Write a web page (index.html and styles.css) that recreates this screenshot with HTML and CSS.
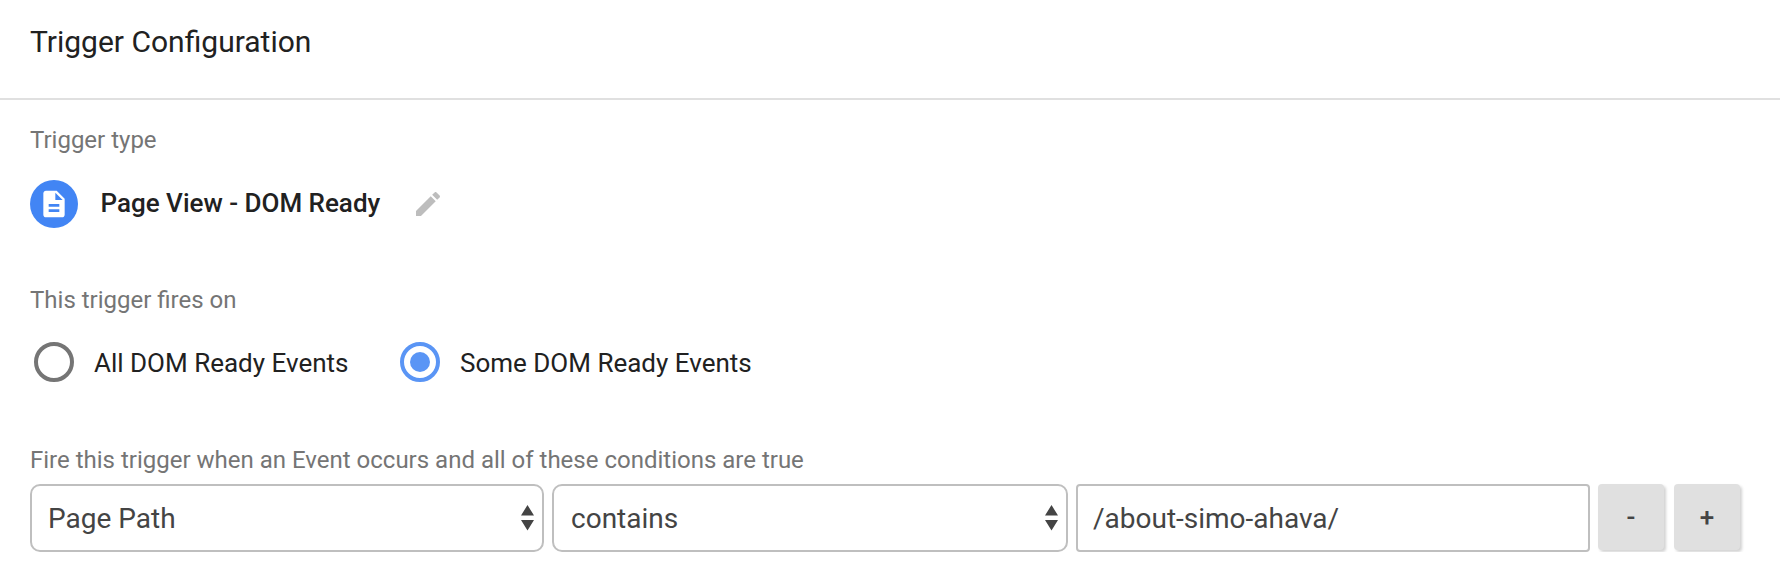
FILE: index.html
```html
<!DOCTYPE html>
<html lang="en">
<head>
<meta charset="utf-8">
<title>Trigger Configuration</title>
<link rel="stylesheet" href="styles.css">
</head>
<body>
<header class="header"><h1 class="title">Trigger Configuration</h1></header>
<main class="content">
  <section class="type-section">
    <div class="label">Trigger type</div>
    <div class="type-row">
      <span class="type-icon">
        <svg width="32" height="32" viewBox="0 0 24 24"><path fill="#fff" d="M14 2H6c-1.1 0-1.99.9-1.99 2L4 20c0 1.1.89 2 1.99 2H18c1.1 0 2-.9 2-2V8l-6-6zm2 16H8v-2h8v2zm0-4H8v-2h8v2zm-3-5V3.500L18.500 9H13z"/></svg>
      </span>
      <span class="type-name">Page View - DOM Ready</span>
      <svg class="edit" width="32" height="32" viewBox="0 0 24 24"><path fill="#bdbdbd" d="M3 17.250V21h3.750L17.810 9.940l-3.750-3.750L3 17.250zM20.710 7.040c.39-.39.39-1.020 0-1.410l-2.340-2.340c-.39-.39-1.020-.39-1.410 0l-1.830 1.830 3.750 3.750 1.830-1.830z"/></svg>
    </div>
  </section>
  <section class="fires-section">
    <div class="label">This trigger fires on</div>
    <div class="radios">
      <div class="radio"><span class="ring"></span><span class="radio-text">All DOM Ready Events</span></div>
      <div class="radio"><span class="ring checked"></span><span class="radio-text">Some DOM Ready Events</span></div>
    </div>
  </section>
  <section>
    <div class="label conditions-label">Fire this trigger when an Event occurs and all of these conditions are true</div>
    <div class="conditions">
      <div class="field select"><span class="value">Page Path</span><svg class="arrows" width="13" height="26" viewBox="0 0 13 26"><path fill="#444" d="M0 10.500 6.500 0 13 10.500zM0 15h13L6.500 25.500z"/></svg></div>
      <div class="field select wide"><span class="value">contains</span><svg class="arrows" width="13" height="26" viewBox="0 0 13 26"><path fill="#444" d="M0 10.500 6.500 0 13 10.500zM0 15h13L6.500 25.500z"/></svg></div>
      <div class="field input"><span class="value">/about-simo-ahava/</span></div>
      <div class="buttons">
        <div class="btn">-</div>
        <div class="btn">+</div>
      </div>
    </div>
  </section>
</main>
</body>
</html>
```
FILE: styles.css
```css
* { box-sizing: border-box; }
body { margin: 0; background: #fff; color: #212121; font-family: Roboto, "Liberation Sans", sans-serif; }
.header { height: 100px; padding: 22px 30px 0; border-bottom: 2px solid #e0e0e0; }
.title { margin: 0; font-size: 30px; line-height: 40px; font-weight: 400; }
.content { padding: 24px 30px 0; }
.label { font-size: 24px; line-height: 32px; color: #757575; }
.type-section { height: 160px; }
.type-row { display: flex; align-items: center; height: 48px; margin-top: 24px; }
.type-icon { display: flex; align-items: center; justify-content: center; width: 48px; height: 48px; border-radius: 50%; background: #4285f4; }
.type-name { width: 281px; margin-left: 22.5px; padding-bottom: 2px; font-size: 26px; font-weight: 500; white-space: nowrap; }
.edit { margin-left: 30.5px; }
.fires-section { height: 160px; }
.radios { display: flex; padding: 26px 4px 0; }
.radio { display: flex; align-items: center; height: 40px; width: 366px; }
.ring { display: flex; align-items: center; justify-content: center; width: 40px; height: 40px; border: 4px solid #757575; border-radius: 50%; }
.checked { border-color: #5a95f5; }
.checked::after { content: ""; width: 20px; height: 20px; border-radius: 50%; background: #5a95f5; }
.radio-text { margin-left: 20px; padding-top: 2px; font-size: 26px; white-space: nowrap; }
.conditions-label { white-space: nowrap; }
.conditions { display: flex; gap: 8px; margin-top: 8px; }
.field { display: flex; align-items: center; justify-content: space-between; width: 514px; height: 68px; padding: 0 8px 0 16px; border: 2px solid #bfbfbf; border-radius: 4px; color: #444; font-size: 28px; }
.select { border-radius: 10px; }
.wide { width: 516px; padding-left: 17px; }
.input { padding-left: 15px; }
.buttons { display: flex; gap: 10px; }
.btn { display: flex; align-items: center; justify-content: center; width: 66px; height: 66px; border-radius: 4px; background: #e0e0e0; box-shadow: 2px 2px 3px rgba(0, 0, 0, .18); color: #444; font-size: 26px; font-weight: 500; }
```
